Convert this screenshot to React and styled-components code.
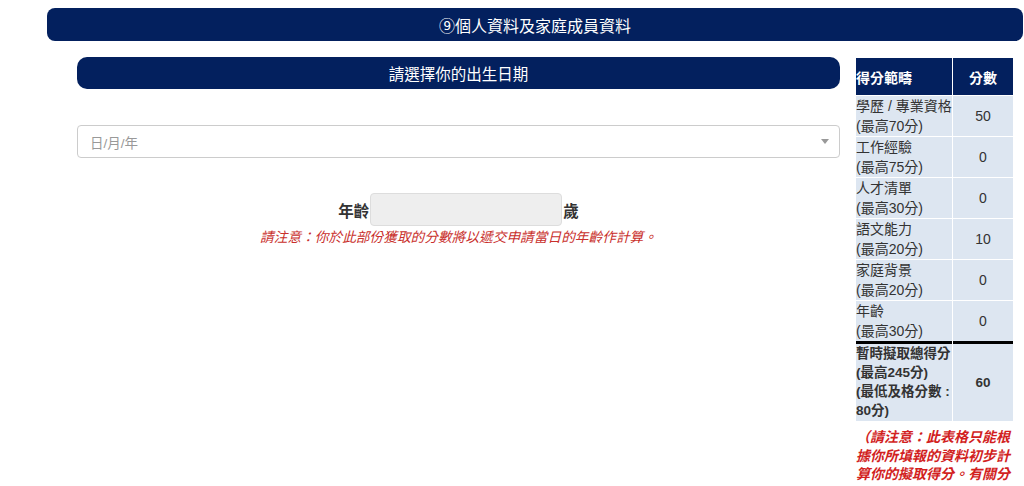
import React from "react";
import styled, { createGlobalStyle } from "styled-components";

const Global = createGlobalStyle`
  html, body { margin: 0; padding: 0; background: #fff; overflow: hidden; }
  body { font-family: "Liberation Sans", "Noto Sans CJK TC", sans-serif; color: #333; }
`;

const NAVY = "#03205e";

const Page = styled.div`
  width: 1024px;
  height: 486px;
  overflow: hidden;
  padding-top: 8px;
  box-sizing: border-box;
`;

const TitleBar = styled.div`
  margin-left: 47px;
  width: 976px;
  height: 33px;
  background: ${NAVY};
  border-radius: 8px;
  color: #fff;
  font-size: 16px;
  display: flex;
  align-items: center;
  justify-content: center;
`;

const Content = styled.div`
  display: flex;
  align-items: flex-start;
  padding-left: 77px;
  margin-top: 16px;
  gap: 16px;
`;

const Main = styled.div`
  width: 763px;
  display: flex;
  flex-direction: column;
`;

const SubBar = styled.div`
  height: 32px;
  background: ${NAVY};
  border-radius: 10px;
  color: #fff;
  font-size: 15.5px;
  display: flex;
  align-items: center;
  justify-content: center;
`;

const Select = styled.div`
  margin-top: 36px;
  height: 33px;
  box-sizing: border-box;
  border: 1px solid #ccc;
  border-radius: 4px;
  display: flex;
  align-items: center;
  justify-content: space-between;
  padding: 0 10px 0 12px;
  color: #999;
  font-size: 13.5px;
`;

const Caret = styled.span`
  width: 0;
  height: 0;
  border-left: 4.5px solid transparent;
  border-right: 4.5px solid transparent;
  border-top: 5px solid #999;
`;

const AgeRow = styled.div`
  margin-top: 35px;
  display: flex;
  align-items: center;
  justify-content: center;
  font-weight: bold;
  font-size: 15.5px;
  color: #333;
`;

const AgeInput = styled.div`
  width: 192px;
  height: 33px;
  box-sizing: border-box;
  background: #eee;
  border: 1px solid #ddd;
  border-radius: 4px;
  margin: 0 1px 0 1px;
`;

const Note = styled.div`
  margin-top: 0;
  text-align: center;
  color: #c9302c;
  font-style: italic;
  font-size: 13.7px;
`;

const Side = styled.div`
  width: 157px;
  margin-top: 1px;
`;

const Table = styled.div`
  display: grid;
  grid-template-columns: 96px 60px;
  column-gap: 1px;
  row-gap: 1px;
  background: #fff;
`;

const Head = styled.div`
  background: ${NAVY};
  color: #fff;
  font-weight: bold;
  font-size: 14px;
  height: 37px;
  display: flex;
  align-items: center;
  justify-content: ${(p) => (p.$center ? "center" : "flex-start")};
`;

const Cell = styled.div`
  background: #dde6f1;
  font-size: 14px;
  line-height: 20px;
  color: #333;
  min-height: 40px;
  display: flex;
  align-items: center;
  justify-content: ${(p) => (p.$center ? "center" : "flex-start")};
`;

const TotalCell = styled(Cell)`
  font-weight: bold;
  font-size: 13.5px;
  line-height: 19px;
  white-space: nowrap;
  border-top: 3px solid #000;
  margin-top: -1px;
  padding-bottom: 1px;
`;

const SideNote = styled.div`
  margin-top: 7px;
  color: #d21f1f;
  font-weight: bold;
  font-style: italic;
  font-size: 14px;
  line-height: 18.5px;
`;

const rows = [
  ["學歷 / 專業資格", "(最高70分)", "50"],
  ["工作經驗", "(最高75分)", "0"],
  ["人才清單", "(最高30分)", "0"],
  ["語文能力", "(最高20分)", "10"],
  ["家庭背景", "(最高20分)", "0"],
  ["年齡", "(最高30分)", "0"],
];

export default function App() {
  return (
    <Page>
      <Global />
      <TitleBar>⑨個人資料及家庭成員資料</TitleBar>
      <Content>
        <Main>
          <SubBar>請選擇你的出生日期</SubBar>
          <Select>
            <span>日/月/年</span>
            <Caret />
          </Select>
          <AgeRow>
            <span>年齡</span>
            <AgeInput />
            <span>歲</span>
          </AgeRow>
          <Note>請注意：你於此部份獲取的分數將以遞交申請當日的年齡作計算。</Note>
        </Main>
        <Side>
          <Table>
            <Head>得分範疇</Head>
            <Head $center>分數</Head>
            {rows.map(([a, b, v]) => (
              <React.Fragment key={a}>
                <Cell>
                  <div>
                    {a}
                    <br />
                    {b}
                  </div>
                </Cell>
                <Cell $center>{v}</Cell>
              </React.Fragment>
            ))}
            <TotalCell>
              <div>
                暫時擬取總得分
                <br />
                (最高245分)
                <br />
                (最低及格分數 :
                <br />
                80分)
              </div>
            </TotalCell>
            <TotalCell $center>60</TotalCell>
          </Table>
          <SideNote>
            （請注意：此表格只能根據你所填報的資料初步計算你的擬取得分。有關分
          </SideNote>
        </Side>
      </Content>
    </Page>
  );
}
